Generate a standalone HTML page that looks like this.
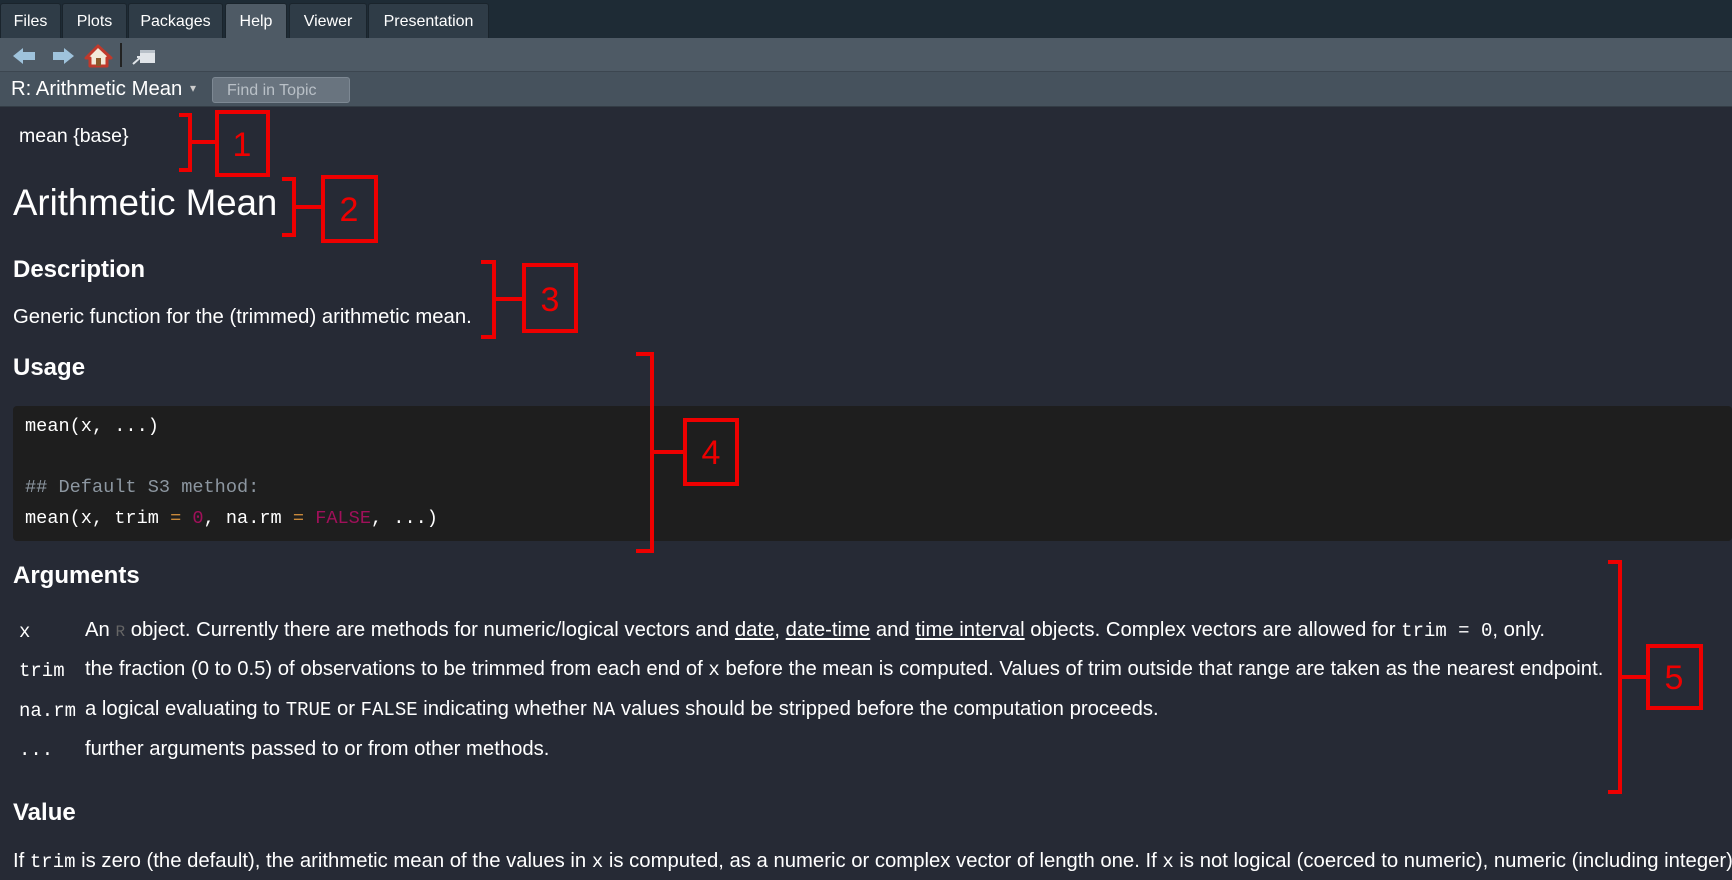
<!DOCTYPE html>
<html><head><meta charset="utf-8"><style>
*{margin:0;padding:0;box-sizing:border-box}
body{width:1732px;height:880px;overflow:hidden;background:#262a35;font-family:"Liberation Sans",Arial,sans-serif;color:#fff;position:relative}
.a{position:absolute;white-space:nowrap}
#tabs{position:absolute;left:0;top:0;width:1732px;height:38px;background:#1e2b35}
.tab{position:absolute;top:3px;height:35px;background:#2f3c47;color:#fff;font-size:16px;line-height:36px;text-align:center;border:1px solid #1a242c;border-bottom:none;border-radius:3px 3px 0 0}
#tb{position:absolute;left:0;top:38px;width:1732px;height:34px;background:#4e5a65;border-bottom:1px solid #3c4650}
#topic{position:absolute;left:0;top:72px;width:1732px;height:35px;background:#46525d;border-bottom:1px solid #333c45}
.mono{font-family:"Liberation Mono","DejaVu Sans Mono",monospace}
.code{position:absolute;left:13px;top:406px;width:1719px;height:135px;background:#1e1e1e;border-radius:4px}
.h{font-weight:bold;font-size:24px}
.p{font-size:20.3px}
.m{font-family:"Liberation Mono",monospace;font-size:19px}
u{text-decoration:underline}
</style></head><body>
<div id="tabs">
<div class="tab" style="left:0;width:61px">Files</div>
<div class="tab" style="left:62px;width:65px">Plots</div>
<div class="tab" style="left:128px;width:95px">Packages</div>
<div class="tab" style="left:225px;width:62px;background:#4e5a65">Help</div>
<div class="tab" style="left:289px;width:78px">Viewer</div>
<div class="tab" style="left:368px;width:121px">Presentation</div>
</div>
<div id="tb">
<svg width="170" height="34" style="position:absolute;left:0;top:0">
<path d="M13 18 L23 10 L23 14 L35 14 L35 22 L23 22 L23 26 Z" fill="#9fc3dc"/>
<path d="M74 18 L64 10 L64 14 L53 14 L53 22 L64 22 L64 26 Z" fill="#9fc3dc"/>
<path d="M86 20 L98 8 L111 20 L107 20 L107 28 L90 28 L90 20 Z" fill="#f2ead9" stroke="#c0392b" stroke-width="3" stroke-linejoin="round"/>
<rect x="96" y="20" width="5" height="8" fill="#8b5a2b"/>
<rect x="120" y="5" width="2" height="24" fill="#222"/>
<rect x="140" y="12" width="15" height="13" fill="#e0e4e8"/>
<rect x="140" y="12" width="15" height="3" fill="#b8c0c8"/>
<path d="M133 26 L141 19 M137 19 L141 19 L141 23" stroke="#e0e4e8" stroke-width="2" fill="none"/>
</svg>
</div>
<div id="topic">
<div class="a" style="left:11px;top:6px;font-size:20.3px">R: Arithmetic Mean</div>
<div class="a" style="left:190px;top:9px;font-size:12px;color:#ccc">▾</div>
<div class="a" style="left:212px;top:5px;width:138px;height:26px;background:#69747f;border:1px solid #7d8893;border-radius:3px;color:#b9c0c7;font-size:16px;line-height:25px;padding-left:14px">Find in Topic</div>
</div>
<div class="a" style="left:19px;top:125px;font-size:19.5px">mean {base}</div>
<div class="a" style="left:13px;top:182px;font-size:36.6px">Arithmetic Mean</div>
<div class="a h" style="left:13px;top:256px">Description</div>
<div class="a p" style="left:13px;top:306px">Generic function for the (trimmed) arithmetic mean.</div>
<div class="a h" style="left:13px;top:354px">Usage</div>
<div class="code"></div>
<div class="a mono" style="left:25px;top:416px;font-size:18.6px">mean(x, ...)</div>
<div class="a mono" style="left:25px;top:477px;font-size:18.6px;color:#8c96a0">## Default S3 method:</div>
<div class="a mono" style="left:25px;top:508px;font-size:18.6px">mean(x, trim <span style="color:#c8883a">=</span> <span style="color:#a0105a">0</span>, na.rm <span style="color:#c8883a">=</span> <span style="color:#a0105a">FALSE</span>, ...)</div>
<div class="a h" style="left:13px;top:562px">Arguments</div>
<div class="a m" style="left:19px;top:621px">x</div>
<div class="a p" style="left:85px;top:619px">An <span class="mono" style="color:#666;font-size:16px">R</span> object. Currently there are methods for numeric/logical vectors and <u>date</u>, <u>date-time</u> and <u>time interval</u> objects. Complex vectors are allowed for <span class="m">trim = 0</span>, only.</div>
<div class="a m" style="left:19px;top:660px">trim</div>
<div class="a p" style="left:85px;top:658px">the fraction (0 to 0.5) of observations to be trimmed from each end of <span class="m">x</span> before the mean is computed. Values of trim outside that range are taken as the nearest endpoint.</div>
<div class="a m" style="left:19px;top:700px">na.rm</div>
<div class="a p" style="left:85px;top:698px">a logical evaluating to <span class="m">TRUE</span> or <span class="m">FALSE</span> indicating whether <span class="m">NA</span> values should be stripped before the computation proceeds.</div>
<div class="a m" style="left:19px;top:739px">...</div>
<div class="a p" style="left:85px;top:738px">further arguments passed to or from other methods.</div>
<div class="a h" style="left:13px;top:799px">Value</div>
<div class="a p" style="left:13px;top:850px">If <span class="m">trim</span> is zero (the default), the arithmetic mean of the values in <span class="m">x</span> is computed, as a numeric or complex vector of length one. If <span class="m">x</span> is not logical (coerced to numeric), numeric (including integer)</div>
<svg width="1732" height="880" style="position:absolute;left:0;top:0" fill="none" stroke="#ee0000" stroke-width="4">
<path d="M179 115 H190 V170 H179 M190 142 H216"/>
<rect x="217" y="112" width="51" height="63"/>
<path d="M282 179 H294 V235 H282 M294 207 H323"/>
<rect x="323" y="177" width="53" height="64"/>
<path d="M481 262 H494 V337 H481 M494 299 H524"/>
<rect x="524" y="265" width="52" height="66"/>
<path d="M636 354 H652 V551 H636 M652 452 H685"/>
<rect x="685" y="420" width="52" height="64"/>
<path d="M1608 562 H1620 V792 H1608 M1620 677 H1648"/>
<rect x="1648" y="646" width="53" height="62"/>
<g fill="#ee0000" stroke="none" font-family="Liberation Sans,sans-serif" font-size="34" text-anchor="middle">
<text x="242" y="156">1</text><text x="349" y="221">2</text><text x="550" y="311">3</text><text x="711" y="464">4</text><text x="1674" y="689">5</text>
</g>
</svg>
</body></html>
